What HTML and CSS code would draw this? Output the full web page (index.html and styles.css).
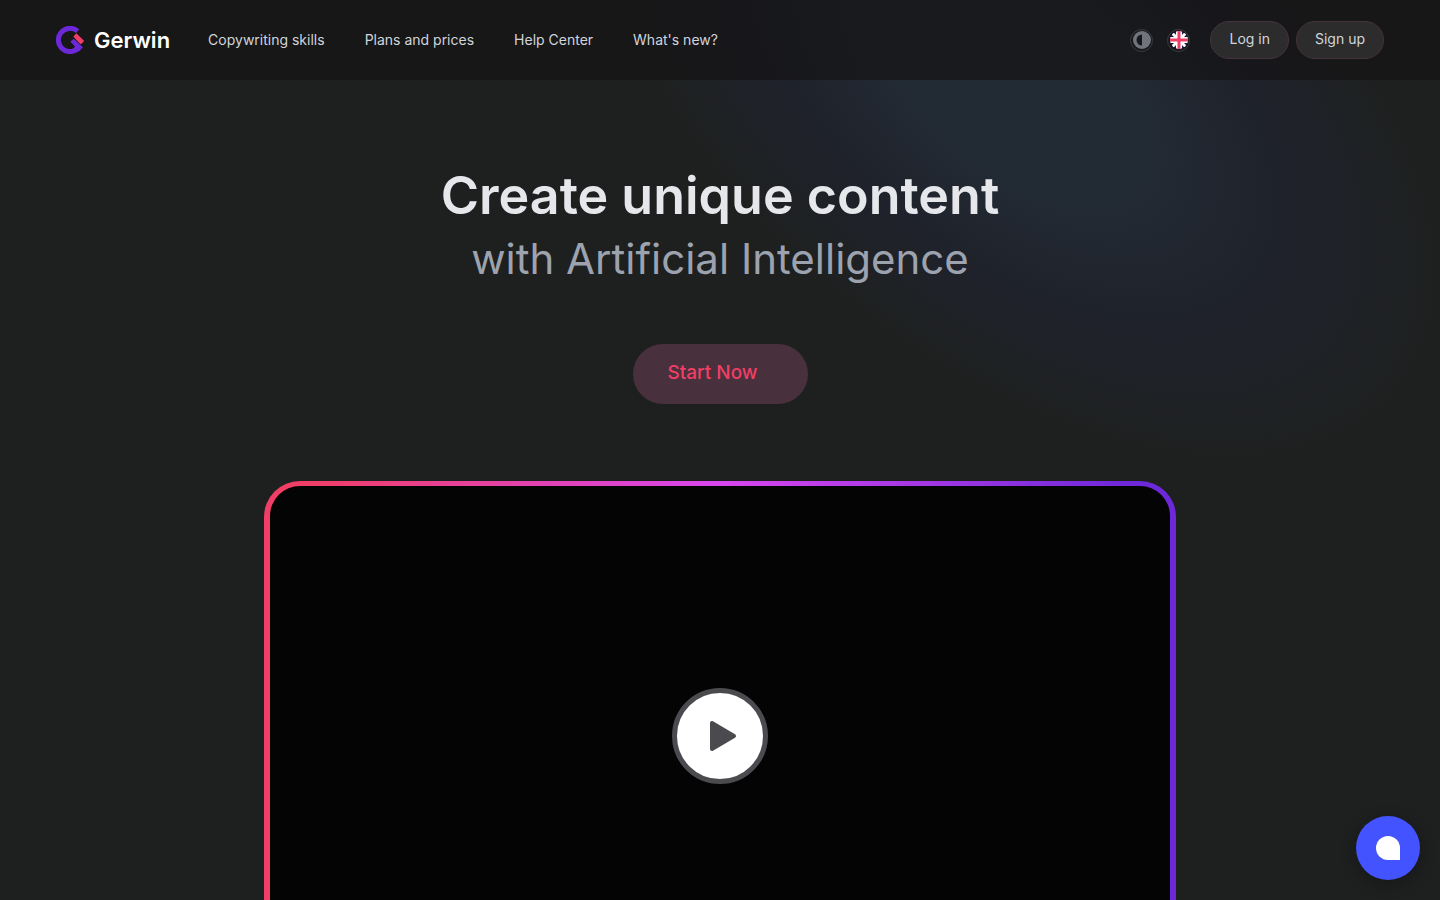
FILE: index.html
```
<!DOCTYPE html>
<html lang="en">

<head>
    <meta charset="UTF-8">
    <meta name="viewport" content="width=device-width, initial-scale=1.0">
    <title>Gerwin</title>
    <link rel="stylesheet" href="styles.css">
</head>

<body>
    <div class="backdrop">
        <div class="glow"></div>
    </div>

    <header class="header">
        <a href="#" class="logo">
            <svg width="28" height="28" viewBox="0 0 28 28" aria-hidden="true">
                <path d="M21.6 5.2A11.6 11.6 0 1 0 23.8 20.2" fill="none" stroke="#6d28d9" stroke-width="5" />
                <path d="M14.3 15.7L17.7 12.7L27 21.3L22.6 25.8L18 21L19 20.5Z" fill="#6d28d9" />
                <path d="M20.4 8.6L26.8 15L24.8 17L18.6 10.6Z" fill="#f03e66" stroke="#f03e66" stroke-width="2" stroke-linejoin="round" />
            </svg>
            <span>Gerwin</span>
        </a>
        <nav class="menu">
            <a href="#">Copywriting skills</a>
            <a href="#">Plans and prices</a>
            <a href="#">Help Center</a>
            <a href="#">What's new?</a>
        </nav>
        <div class="tools">
            <button class="round-btn" aria-label="Switch theme">
                <svg width="18" height="18" viewBox="0 0 18 18">
                    <circle cx="9" cy="9" r="9" fill="#71757b" />
                    <path d="M9 3.5A5.5 5.5 0 0 0 9 14.5Z" fill="#18191a" />
                </svg>
            </button>
            <button class="round-btn" aria-label="Language">
                <svg width="18" height="18" viewBox="0 0 18 18">
                    <clipPath id="flag"><circle cx="9" cy="9" r="9" /></clipPath>
                    <g clip-path="url(#flag)">
                        <rect width="18" height="18" fill="#1e1b4b" />
                        <path d="M0 0L18 18M18 0L0 18" stroke="#fff" stroke-width="3" />
                        <path d="M9 0V18M0 9H18" stroke="#fff" stroke-width="6" />
                        <path d="M9 0V18M0 9H18" stroke="#f03e66" stroke-width="3" />
                    </g>
                </svg>
            </button>
        </div>
        <div class="account">
            <a href="#" class="pill">Log in</a>
            <a href="#" class="pill">Sign up</a>
        </div>
    </header>

    <main class="hero">
        <h1>Create unique content</h1>
        <p class="subtitle">with Artificial Intelligence</p>
        <a href="#" class="start">Start Now</a>

        <div class="video">
            <div class="screen">
                <button class="play" aria-label="Play video">
                    <svg width="28" height="32" viewBox="0 0 28 32">
                        <path d="M3 3V29L25 16Z" fill="#4b4b4f" stroke="#4b4b4f" stroke-width="4" stroke-linejoin="round" />
                    </svg>
                </button>
            </div>
        </div>
    </main>

    <button class="chat" aria-label="Open chat"><span class="drop"></span></button>
</body>

</html>
```
FILE: styles.css
```
body {
    position: relative;
    margin: 0;
    min-height: 100vh;
    font-family: Inter, "Liberation Sans", sans-serif;
    color: #d1d5db;
    background-color: #1e201f;
}

a {
    color: inherit;
    text-decoration: none;
}

button {
    padding: 0;
    border: none;
    cursor: pointer;
}

.backdrop {
    position: absolute;
    z-index: -1;
    top: 0;
    left: 0;
    width: 100%;
    height: 100%;
    overflow: hidden;
}

/* soft blue light behind the header and title */
.glow {
    position: absolute;
    top: -190px;
    right: -80px;
    width: 1000px;
    height: 560px;
    background-image: radial-gradient(closest-side, #222a33 30%, #1f222b 62%, #1e201f);
    transform: rotate(38deg);
}

.header {
    display: flex;
    align-items: center;
    height: 80px;
    padding: 0 56px;
    box-sizing: border-box;
    background-color: rgba(20, 19, 20, 0.65);
    font-size: 14px;
}

.logo {
    display: flex;
    align-items: center;
    gap: 10px;
    padding-bottom: 1px;
    color: white;
    font-size: 22px;
    font-weight: 600;
    line-height: 28px;
}

.menu {
    display: flex;
    gap: 40px;
    margin-left: 38px;
    padding-bottom: 2px;
}

.tools {
    display: flex;
    gap: 14px;
    margin-left: auto;
}

.round-btn {
    display: flex;
    align-items: center;
    justify-content: center;
    width: 23px;
    height: 23px;
    box-sizing: border-box;
    border: 1px solid #403a40;
    border-radius: 50%;
    background-color: #18191a;
}

.account {
    display: flex;
    gap: 7px;
    margin-left: 20px;
}

.pill {
    height: 38px;
    padding: 0 18px;
    box-sizing: border-box;
    border: 1px solid #46333c;
    border-radius: 19px;
    background-color: #2c2c2d;
    line-height: 34px;
}

.hero {
    display: flex;
    flex-direction: column;
    align-items: center;
    padding-top: 84px;
}

h1 {
    margin: 0;
    color: #e5e7eb;
    font-size: 52px;
    font-weight: 600;
    line-height: 64px;
}

.subtitle {
    margin: 0;
    color: #9ca3af;
    font-size: 42px;
    font-weight: 400;
    line-height: 62px;
}

.start {
    width: 175px;
    height: 60px;
    margin: 54px 0 77px;
    padding: 0 35px;
    box-sizing: border-box;
    border-radius: 30px;
    background-color: #48303c;
    color: #f03e66;
    font-size: 19px;
    font-weight: 500;
    line-height: 58px;
    white-space: nowrap;
}

.video {
    width: 912px;
    max-width: 100%;
    padding: 5px 6px;
    box-sizing: border-box;
    border-radius: 36px;
    background-image: linear-gradient(to right, #f03e66 5%, #d946ef 50%, #6d28d9 95%);
}

.screen {
    display: flex;
    align-items: center;
    justify-content: center;
    height: 500px;
    border-radius: 30px;
    background-color: #040404;
}

.play {
    display: flex;
    align-items: center;
    justify-content: center;
    width: 96px;
    height: 96px;
    padding-left: 5px;
    border: 5px solid #4b4b4f;
    border-radius: 50%;
    background-color: white;
}

.chat {
    position: fixed;
    right: 20px;
    bottom: 20px;
    display: flex;
    align-items: center;
    justify-content: center;
    width: 64px;
    height: 64px;
    border-radius: 50%;
    background-color: #4353ff;
    box-shadow: 0 4px 16px rgba(0, 0, 0, 0.3);
}

.drop {
    width: 24px;
    height: 24px;
    border-radius: 12px 12px 0 12px;
    background-color: white;
}
```
